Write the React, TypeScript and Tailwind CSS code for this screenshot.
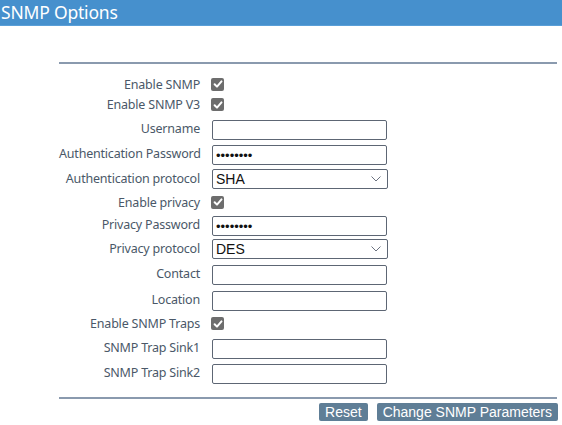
import React from "react";

type Row =
  | { kind: "check"; label: string; h: string }
  | { kind: "text"; label: string; h: string }
  | { kind: "password"; label: string; h: string }
  | { kind: "select"; label: string; h: string; value: string };

const rows: Row[] = [
  { kind: "check", label: "Enable SNMP", h: "h-[20px]" },
  { kind: "check", label: "Enable SNMP V3", h: "h-[21px]" },
  { kind: "text", label: "Username", h: "h-[26px]" },
  { kind: "password", label: "Authentication Password", h: "h-[25px]" },
  { kind: "select", label: "Authentication protocol", h: "h-[25px]", value: "SHA" },
  { kind: "check", label: "Enable privacy", h: "h-[22px]" },
  { kind: "password", label: "Privacy Password", h: "h-[23px]" },
  { kind: "select", label: "Privacy protocol", h: "h-[25px]", value: "DES" },
  { kind: "text", label: "Contact", h: "h-[25px]" },
  { kind: "text", label: "Location", h: "h-[26px]" },
  { kind: "check", label: "Enable SNMP Traps", h: "h-[23px]" },
  { kind: "text", label: "SNMP Trap Sink1", h: "h-[24px]" },
  { kind: "text", label: "SNMP Trap Sink2", h: "h-[26px]" },
];

function Check() {
  return (
    <div className="w-[13px] h-[13px] rounded-[2px] bg-[#6d6d6d] flex items-center justify-center">
      <svg width="10" height="10" viewBox="0 0 10 10">
        <path d="M1.6 5.2 L4 7.6 L8.5 2.4" stroke="white" strokeWidth="2" fill="none" strokeLinecap="round" strokeLinejoin="round" />
      </svg>
    </div>
  );
}

function Control({ row }: { row: Row }) {
  if (row.kind === "check") return <Check />;
  if (row.kind === "select")
    return (
      <div className="w-[176px] h-[20px] border border-[#5d6674] rounded-[2px] flex items-center justify-between pl-[3px] pr-[6px] bg-white">
        <span className="text-[14px] text-[#111] leading-none" style={{ fontFamily: '"Liberation Sans", Arial, sans-serif' }}>
          {row.value}
        </span>
        <svg width="10" height="6" viewBox="0 0 10 6">
          <path d="M0.5 0.5 L5 5 L9.5 0.5" stroke="#6b7280" strokeWidth="1" fill="none" />
        </svg>
      </div>
    );
  return (
    <input
      type={row.kind === "password" ? "password" : "text"}
      defaultValue={row.kind === "password" ? "password" : ""}
      readOnly
      className="w-[175px] h-[20px] border border-[#5d6674] rounded-[2px] px-[3px] text-[13px] text-[#111] outline-none bg-white"
      style={{ fontFamily: '"Liberation Sans", Arial, sans-serif' }}
    />
  );
}

export default function App() {
  return (
    <div className="w-[562px] h-[425px] bg-white overflow-hidden" style={{ fontFamily: '"Noto Sans", "Open Sans", sans-serif' }}>
      <div className="h-[26px] bg-[#4690cd] border-b border-[#5a9fd8] flex items-center pl-[1px]">
        <span className="text-white text-[17.5px] leading-none tracking-[-0.2px]">SNMP Options</span>
      </div>
      <div className="ml-[59px] w-[498px] mt-[36px]">
        <div className="border-t-2 border-[#8a9aae]" />
        <div className="mt-[10px] flex flex-col">
          {rows.map((r) => (
            <div key={r.label} className={`flex items-center ${r.h}`}>
              <div className="w-[141px] text-right text-[12.5px] tracking-[-0.2px] text-[#4a5868] whitespace-nowrap leading-none translate-y-[1px]">{r.label}</div>
              <div className={r.kind === "check" ? "ml-[11px]" : "ml-[12px]"}>
                <Control row={r} />
              </div>
            </div>
          ))}
        </div>
        <div className="mt-[12px] border-t-2 border-[#8a9aae]" />
        <div className="mt-[4px] flex justify-end gap-[9px] -mr-[1px]" style={{ fontFamily: '"Liberation Sans", Arial, sans-serif' }}>
          <button className="h-[18px] px-[6px] bg-[#5f7e96] text-white text-[14px] leading-none rounded-[2px]">Reset</button>
          <button className="h-[18px] px-[6px] bg-[#5f7e96] text-white text-[14px] leading-none rounded-[2px]">Change SNMP Parameters</button>
        </div>
      </div>
    </div>
  );
}
